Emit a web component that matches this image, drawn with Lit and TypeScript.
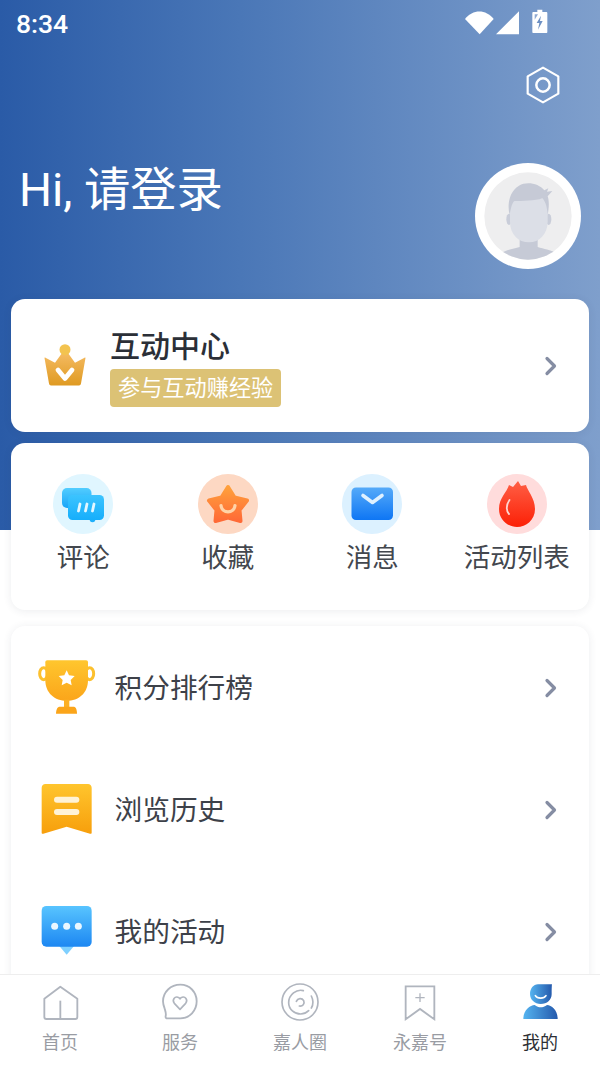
import { LitElement, html, css, svg } from "lit";
import { customElement } from "lit/decorators.js";

const chevron = html`<svg class="chev" viewBox="0 0 14 22"><path d="M3 3.500 10.500 11 3 18.500" fill="none" stroke="#858da3" stroke-width="3.200" stroke-linecap="round" stroke-linejoin="round"/></svg>`;

const grad = (id: string, a: string, b: string, horizontal = false) => svg`
  <linearGradient id=${id} x1="0" y1="0" x2=${horizontal ? 1 : 0} y2=${horizontal ? 0 : 1}>
    <stop offset="0" stop-color=${a}/><stop offset="1" stop-color=${b}/>
  </linearGradient>`;

const iconComment = html`<svg viewBox="0 0 60 60" class="q">
  <defs>${grad("gc1", "#52cdff", "#1aa5f8")}${grad("gc2", "#3cc4ff", "#16aefb")}</defs>
  <circle cx="30" cy="30" r="30" fill="#e0f6ff"/>
  <rect x="9" y="14" width="29.500" height="20" rx="5" fill="url(#gc1)"/>
  <circle cx="39.500" cy="45.500" r="2.800" fill="#1eb0fb"/>
  <rect x="15" y="21" width="36" height="25" rx="4.500" fill="url(#gc2)"/>
  <g stroke="#e4f7ff" stroke-width="2.800" stroke-linecap="round"><path d="M25.500 37 27 30M32.500 37 34 30M39.500 37 41 30"/></g>
</svg>`;

const iconStar = html`<svg viewBox="0 0 60 60" class="q">
  <defs>${grad("gs", "#ffa03c", "#ff6a36")}</defs>
  <circle cx="30" cy="30" r="30" fill="#fdd8c3"/>
  <path d="M30 13 36.500 23.500 49 26.500 41.500 36 42.500 47 30 43.500 17.500 47 18.500 36 11 26.500 23.500 23.500Z" fill="url(#gs)" stroke="url(#gs)" stroke-width="4" stroke-linejoin="round"/>
  <path d="M23 31.500c1 8.500 13 8.500 14 0" fill="none" stroke="#ffd3a8" stroke-width="3.200" stroke-linecap="round"/>
</svg>`;

const iconMail = html`<svg viewBox="0 0 60 60" class="q">
  <defs>${grad("gm", "#55aaf9", "#0e76f4")}</defs>
  <circle cx="30" cy="30" r="30" fill="#dcf1ff"/>
  <rect x="9.500" y="13.500" width="41.500" height="32.500" rx="4.500" fill="url(#gm)"/>
  <path d="M21 21.500 30.500 28.500 40 21.500" fill="none" stroke="#dff1ff" stroke-width="3.600" stroke-linecap="round" stroke-linejoin="round"/>
</svg>`;

const iconFlame = html`<svg viewBox="0 0 60 60" class="q">
  <defs>${grad("gf", "#ff5f45", "#fc2006")}</defs>
  <circle cx="30" cy="30" r="30" fill="#ffdcdc"/>
  <path d="M31 7 34 12 39 11C40 16 48 24 48 35 48 46 39 53 30 53 21 53 12 46 12 35 12 24 20 18 22 11L26 13Z" fill="url(#gf)"/>
  <path d="M22.500 26C19 31 19 37 22 40" fill="none" stroke="#ffd5cf" stroke-width="1.800" stroke-linecap="round"/>
</svg>`;

const iconCrown = html`<svg class="crown" viewBox="0 0 42 42">
  <defs>${grad("gcr", "#f6bd66", "#df9a22")}</defs>
  <path d="M.6 14.500C.3 13.800.8 13.400 1.500 13.700L11 18.700 18.800 8C20 6.500 22 6.500 23.200 8L31 18.700 40.500 13.700C41.200 13.400 41.700 13.800 41.400 14.500L37 39.500C36.800 40.800 36 41.500 35 41.500H7C6 41.500 5.200 40.800 5 39.500Z" fill="url(#gcr)"/>
  <circle cx="21" cy="5.700" r="5.500" fill="#f3c34f"/>
  <path d="M14 26 21 34.500 28 26" fill="none" stroke="#fff" stroke-width="4.800" stroke-linecap="round" stroke-linejoin="round"/>
</svg>`;

const iconTrophy = html`<svg class="rowicon" viewBox="50 50 186 180">
  <defs>${grad("gt", "#ffc62e", "#fba51a")}</defs>
  <g fill="none" stroke="#fcc02e" stroke-width="9"><ellipse cx="73" cy="100" rx="12" ry="18"/><ellipse cx="211" cy="100" rx="12" ry="18"/></g>
  <path d="M84 60H200C204 60 206 62 206 66V120C206 158 178 182 142 182 106 182 78 158 78 120V66C78 62 80 60 84 60Z" fill="url(#gt)"/>
  <rect x="134" y="178" width="16" height="26" fill="#fcb025"/>
  <path d="M120 199H164C170 199 173 210 173 220H110C110 210 114 199 120 199Z" fill="#fba51a"/>
  <path d="M142 90 149 105 166 107 154 119 157 135 142 127 127 135 130 119 118 107 135 105Z" fill="#fff"/>
</svg>`;

const iconHistory = html`<svg class="rowicon" viewBox="50 417 186 180">
  <defs>${grad("gh", "#ffc52d", "#f79f0c")}</defs>
  <path d="M78 432H206C212 432 217 437 217 443V578C217 581 215 582 212 581L142 560 72 581C69 582 67 581 67 578V443C67 437 72 432 78 432Z" fill="url(#gh)"/>
  <rect x="104" y="470" width="76" height="18" rx="9" fill="#fff3d6"/>
  <rect x="104" y="507" width="76" height="18" rx="9" fill="#fff3d6"/>
</svg>`;

const iconActivity = html`<svg class="rowicon" viewBox="50 782 186 180">
  <defs>${grad("ga", "#58c4ff", "#1d87f2")}</defs>
  <path d="M118 915H166L142 943Z" fill="#7fd0ff"/>
  <rect x="67" y="797" width="150" height="122" rx="14" fill="url(#ga)"/>
  <g fill="#eaf7ff"><circle cx="106" cy="858" r="10.500"/><circle cx="142" cy="858" r="10.500"/><circle cx="177" cy="858" r="10.500"/></g>
</svg>`;

const tabStroke = "#b0b5be";
const tabHome = html`<svg class="tabicon" viewBox="120 50 120 120"><g fill="none" stroke=${tabStroke} stroke-width="5.500" stroke-linejoin="round">
  <path d="M133 100 181 64 232 100V155C232 159 230 161 226 161H139C135 161 133 159 133 155Z"/><path d="M181 106V160"/></g></svg>`;
const tabService = html`<svg class="tabicon" viewBox="480 50 120 120"><g fill="none" stroke=${tabStroke} stroke-width="5.500" stroke-linejoin="round">
  <path d="M541 58C569 58 590 80 590 108 590 136 569 159 541 159H503C498 159 496 157 497 152 499 145 497 140 494 130 491 122 489 115 489 108 489 80 512 58 541 58Z"/>
  <path d="M540 132 523 114C515 104 525 92 534 96 537 97 539 99 540 101 541 99 543 97 546 96 555 92 565 104 557 114Z" stroke-width="5"/></g></svg>`;
const tabRing = html`<svg class="tabicon" viewBox="0 50 120 120"><g fill="none" stroke=${tabStroke} stroke-width="5" stroke-linecap="round">
  <circle cx="60" cy="110" r="54"/>
  <path d="M70 76C50 70 26 88 26 112 26 132 44 146 62 146 72 146 80 142 86 136"/>
  <path d="M94 92C100 104 100 118 94 128"/>
  <path d="M49 108C53 98 66 97 71 106 75 115 68 124 58 122"/></g></svg>`;
const tabNews = html`<svg class="tabicon" viewBox="302 50 120 120"><g fill="none" stroke=${tabStroke} stroke-width="5.500" stroke-linejoin="miter">
  <path d="M319 63H405V162L362 131 319 162Z"/><path d="M348 97H376M362 84V110" stroke-width="4"/></g></svg>`;
const tabMine = html`<svg class="tabicon" viewBox="660 50 120 120">
  <defs>${grad("gmine", "#55b4f0", "#2459ac", true)}</defs>
  <path d="M714 57H756C756 57 755 60 755 86 755 104 741 116 722 116 704 116 690 103 690 86 690 70 700 57 714 57Z" fill="url(#gmine)"/>
  <path d="M670 161C670 135 690 119 704 119 710 124 716 126 722 126 728 126 735 124 741 119 755 119 773 135 773 161Z" fill="url(#gmine)"/>
  <path d="M706 91C712 101 732 101 738 91" fill="none" stroke="#fff" stroke-width="5" stroke-linecap="round"/>
</svg>`;

@customElement("app-root")
export class AppRoot extends LitElement {
  static styles = css`
    :host {
      display: block;
      width: 600px;
      height: 1066px;
      font-family: Roboto, "Noto Sans CJK SC", sans-serif;
      background: #fff;
      overflow: hidden;
    }
    .page { height: 1066px; display: flex; flex-direction: column; }
    .main { flex: 1; min-height: 0; overflow: hidden; }
    .hero {
      height: 530px;
      background: linear-gradient(90deg, #2a5ba7 0%, #4a77b7 40%, #7f9fcc 100%);
      color: #fff;
    }
    .status {
      height: 48px;
      box-sizing: border-box;
      padding: 7px 46.67px 0 16px;
      display: flex;
      justify-content: space-between;
      align-items: flex-start;
    }
    .time { font-size: 26.500px; line-height: 34px; font-weight: 500; }
    .sicons { width: 93.33px; height: 30px; display: block; }
    .settings { display: flex; justify-content: flex-end; padding: 17px 36.67px 0 0; }
    .settings svg { width: 40px; height: 40px; display: block; }
    .greet {
      margin-top: 58px;
      padding: 0 19px;
      display: flex;
      justify-content: space-between;
      align-items: flex-start;
    }
    .hi { font-size: 46.300px; line-height: 54px; }
    .avatar { width: 106px; height: 106px; display: block; }

    .cards {
      margin-top: -231px;
      padding: 0 11px;
      display: flex;
      flex-direction: column;
    }
    .card {
      background: #fff;
      border-radius: 14px;
      box-shadow: 0 1px 8px rgba(40, 50, 80, 0.09);
    }
    .center {
      height: 133px;
      display: flex;
      align-items: center;
      padding: 0 31px 0 33px;
    }
    .crown { width: 42px; height: 42px; flex: none; margin-right: 24px; margin-bottom: 2px; }
    .ctext { flex: 1; display: flex; flex-direction: column; align-items: flex-start; }
    .ctitle { font-size: 30px; line-height: 44px; font-weight: 500; color: #2b2f37; }
    .badge {
      height: 38px;
      line-height: 38px;
      padding: 0 8px;
      background: #dcc275;
      color: #fff;
      font-size: 22.200px;
      border-radius: 4px;
    }
    .chev { width: 14px; height: 22px; flex: none; display: block; }

    .quick {
      margin-top: 11px;
      height: 167px;
      box-sizing: border-box;
      padding-top: 31px;
      display: grid;
      grid-template-columns: repeat(4, 1fr);
    }
    .qitem { display: flex; flex-direction: column; align-items: center; gap: 6px; }
    .q { width: 60px; height: 60px; display: block; }
    .qlabel { font-size: 26.500px; line-height: 36px; color: #43474e; white-space: nowrap; }

    .list { margin-top: 16px; }
    .row {
      height: 122px;
      display: flex;
      align-items: center;
      padding: 0 31px 0 25px;
    }
    .row .chev { margin-top: 2px; }
    .rowicon { width: 62px; height: 60px; flex: none; display: block; margin-right: 16.500px; }
    .rowlabel { flex: 1; font-size: 27.700px; color: #3d4149; padding-bottom: 2px; }

    .tabs {
      flex: none;
      height: 92px;
      box-sizing: border-box;
      background: #fff;
      border-top: 1px solid #eeeeee;
      padding-top: 7px;
      display: grid;
      grid-template-columns: repeat(5, 1fr);
      position: relative;
    }
    .tab { display: flex; flex-direction: column; align-items: center; gap: 9px; }
    .tabicon { width: 40px; height: 40px; display: block; }
    .tablabel { font-size: 18px; line-height: 24px; color: #999ca3; }
    .tab.on .tablabel { color: #2d2f34; }
  `;

  render() {
    const quick = [
      [iconComment, "评论"],
      [iconStar, "收藏"],
      [iconMail, "消息"],
      [iconFlame, "活动列表"],
    ];
    const rows = [
      [iconTrophy, "积分排行榜"],
      [iconHistory, "浏览历史"],
      [iconActivity, "我的活动"],
    ];
    const tabs: [unknown, string, boolean][] = [
      [tabHome, "首页", false],
      [tabService, "服务", false],
      [tabRing, "嘉人圈", false],
      [tabNews, "永嘉号", false],
      [tabMine, "我的", true],
    ];
    return html`
      <div class="page">
        <div class="main">
          <div class="hero">
            <div class="status">
              <span class="time">8:34</span>
              <svg class="sicons" viewBox="0 20 280 90">
                <path d="M15 56C38 26 78 26 101 56L59 102Z" fill="#fff"/>
                <path d="M108 102 177 33V102Z" fill="#fff"/>
                <path d="M232 28H247V35H258C261 35 262 36 262 39V94C262 97 261 98 258 98H221C218 98 217 97 217 94V39C217 36 218 35 221 35H232Z" fill="#fff"/>
                <path d="M243 46 230 68H238L234 88 248 62H240Z" fill="#6d90c3"/>
                <path d="M224 42H234L224 58Z" fill="#8faad3"/>
              </svg>
            </div>
            <div class="settings">
              <svg viewBox="190 195 120 120">
                <path d="M250 203 296 229V281L250 307 204 281V229Z" fill="none" stroke="#fff" stroke-width="6.500" stroke-linejoin="round"/>
                <circle cx="250" cy="255" r="20" fill="none" stroke="#fff" stroke-width="7.500"/>
              </svg>
            </div>
            <div class="greet">
              <div class="hi">Hi, 请登录</div>
              <svg class="avatar" viewBox="30 24 318 318">
                <defs><clipPath id="av"><circle cx="189" cy="183" r="131"/></clipPath></defs>
                <circle cx="189" cy="183" r="159" fill="#fff"/>
                <circle cx="189" cy="183" r="131" fill="#eeeeef"/>
                <g clip-path="url(#av)">
                  <path d="M108 296C120 284 146 282 164 276V240H218V276C236 282 258 284 272 294L272 330H108Z" fill="#c6cad6"/>
                  <ellipse cx="132" cy="193" rx="8" ry="17" fill="#c9cdd9"/>
                  <ellipse cx="251" cy="193" rx="8" ry="17" fill="#c9cdd9"/>
                  <path d="M135 130H248V200C248 238 222 262 192 262 160 262 135 238 135 200Z" fill="#dcdfe7"/>
                  <path d="M134 180C126 150 132 110 162 92 186 78 222 86 238 106L250 100 246 110 262 108 248 124C253 138 252 158 248 180 246 156 242 140 232 130 210 138 170 138 148 138 140 146 137 162 134 180Z" fill="#c6cad6"/>
                </g>
              </svg>
            </div>
          </div>
          <div class="cards">
            <div class="card center">
              ${iconCrown}
              <div class="ctext">
                <div class="ctitle">互动中心</div>
                <div class="badge">参与互动赚经验</div>
              </div>
              ${chevron}
            </div>
            <div class="card quick">
              ${quick.map(([i, t]) => html`<div class="qitem">${i}<div class="qlabel">${t}</div></div>`)}
            </div>
            <div class="card list">
              ${rows.map(([i, t]) => html`<div class="row">${i}<div class="rowlabel">${t}</div>${chevron}</div>`)}
            </div>
          </div>
        </div>
        <div class="tabs">
          ${tabs.map(([i, t, on]) => html`<div class="tab ${on ? "on" : ""}">${i}<div class="tablabel">${t}</div></div>`)}
        </div>
      </div>
    `;
  }
}
